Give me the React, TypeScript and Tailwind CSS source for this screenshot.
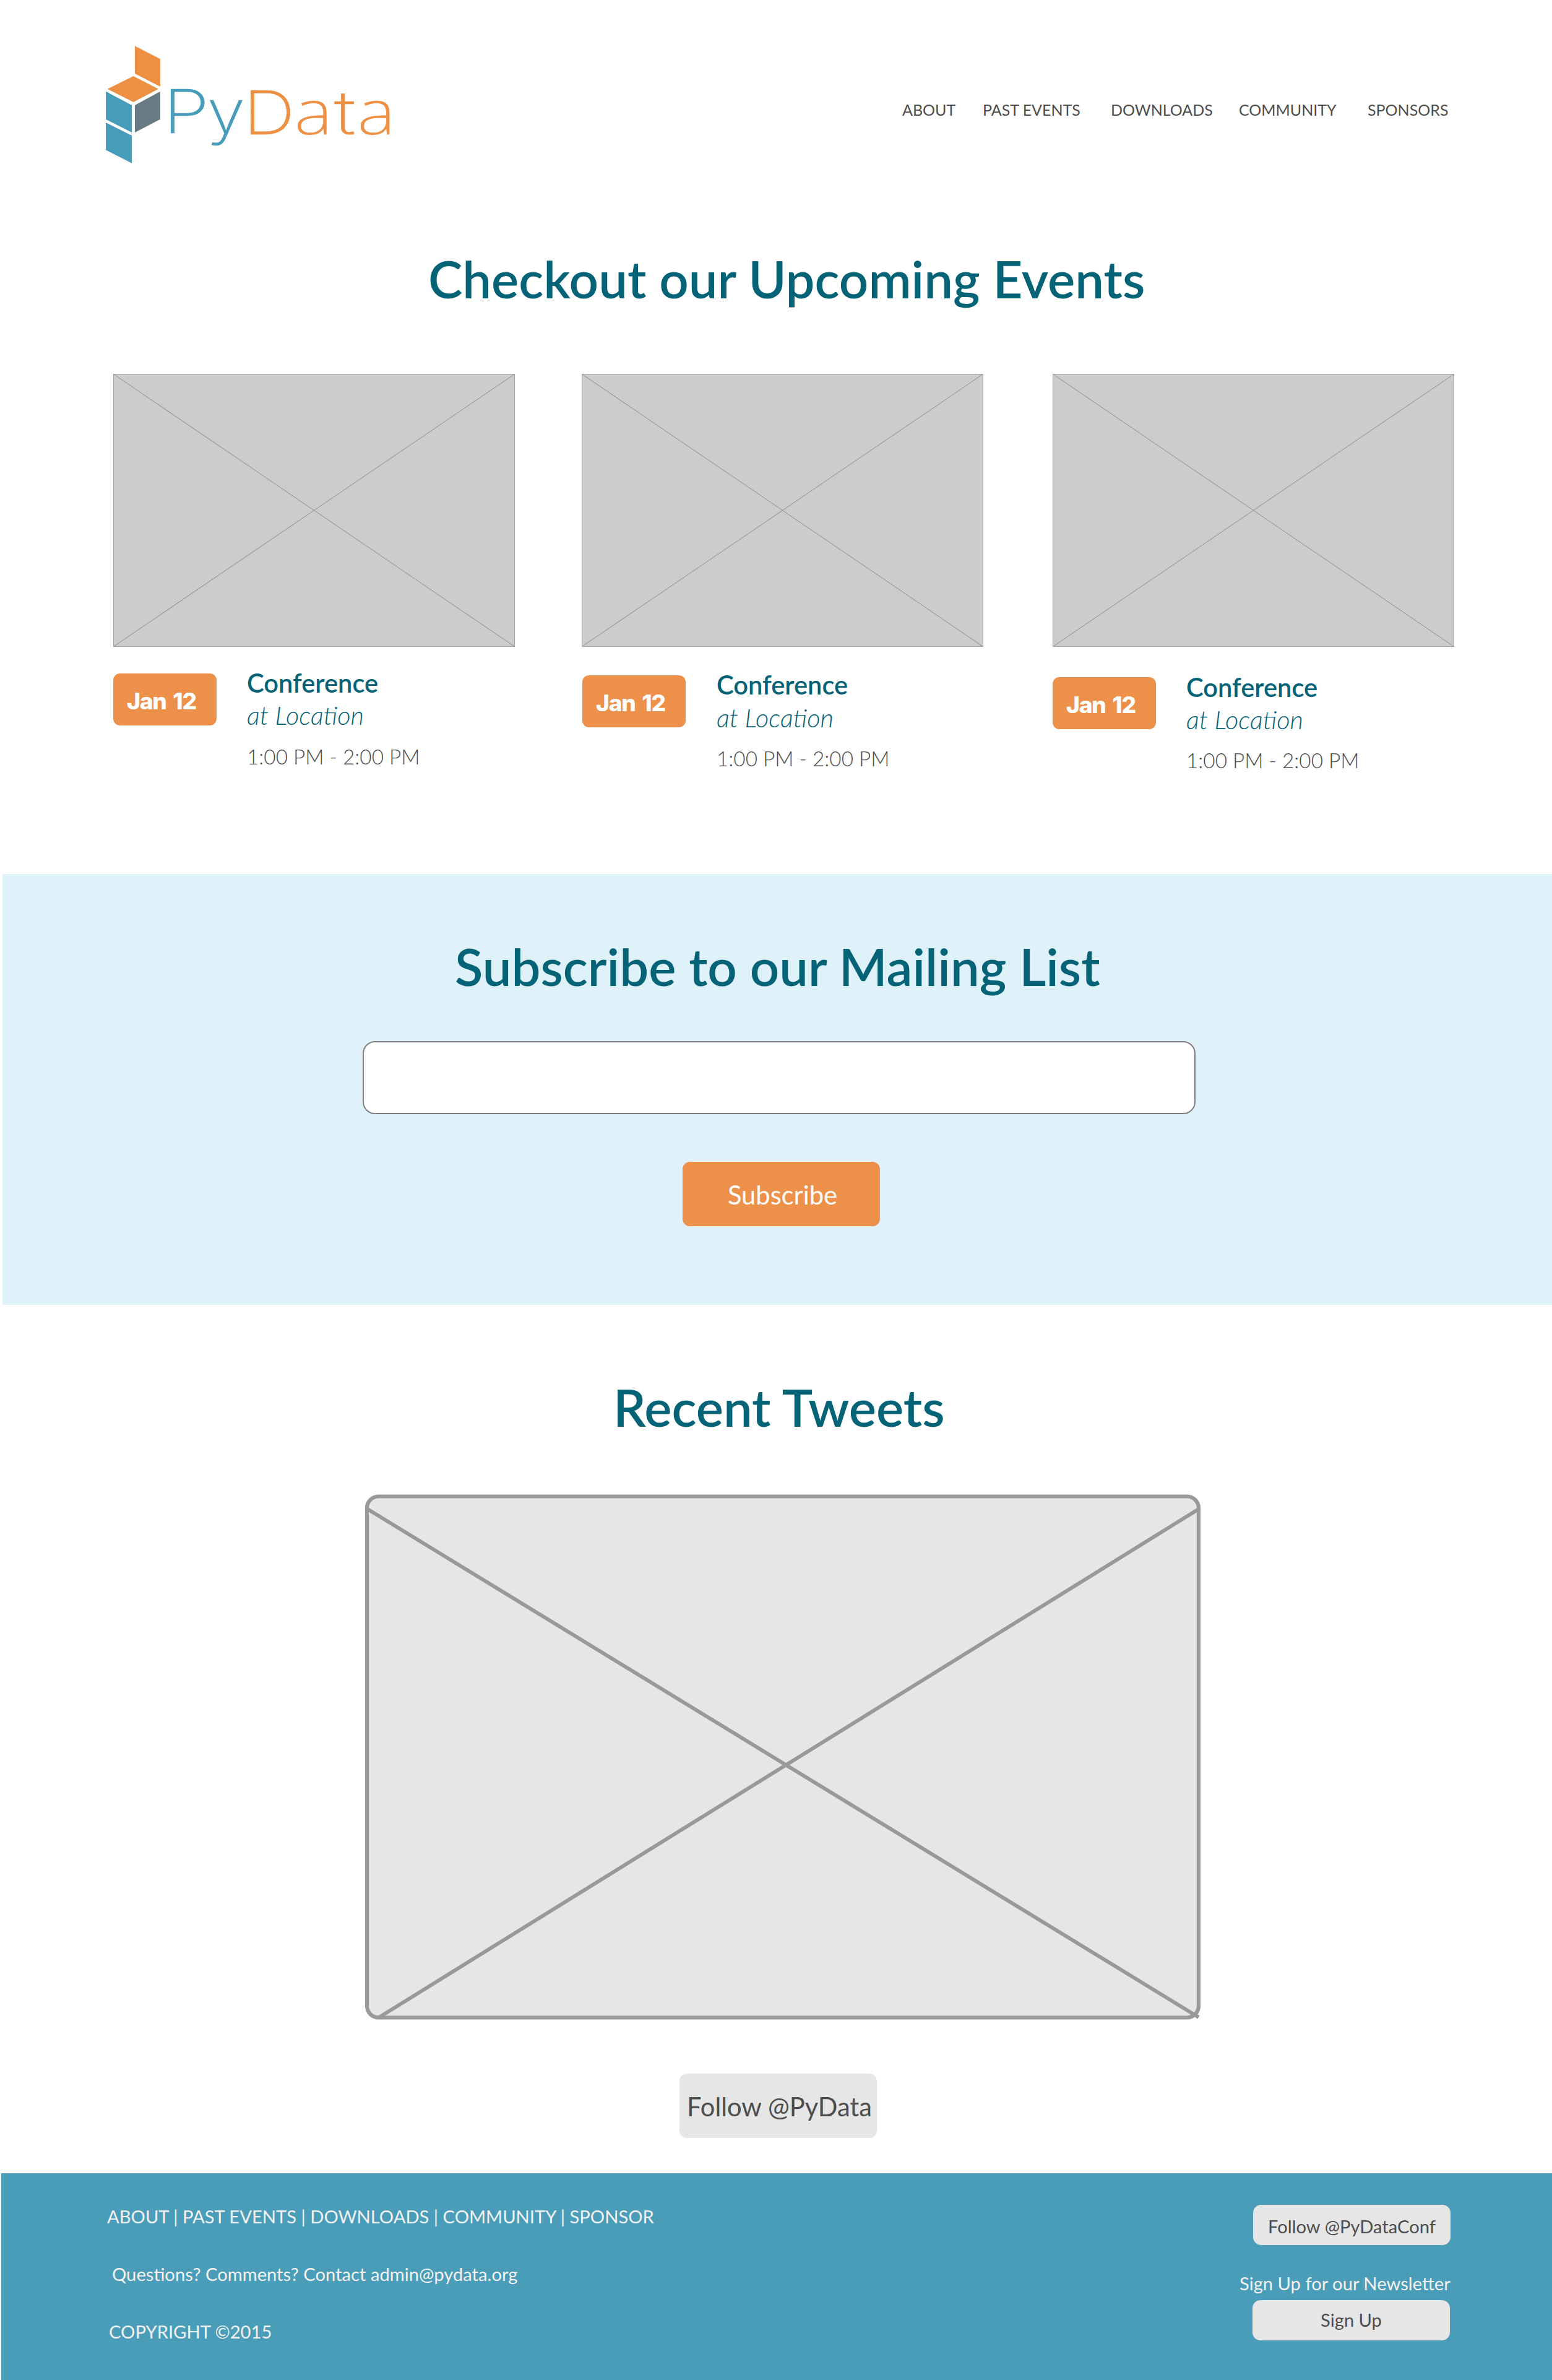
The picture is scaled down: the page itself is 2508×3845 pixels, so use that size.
const navItems = ["ABOUT", "PAST EVENTS", "DOWNLOADS", "COMMUNITY", "SPONSORS"];

const letters = [
  { c: "P", font: "Inter", size: 98, fill: "#479cba", t: "translate(263.5 215) scale(1.235 1)" },
  { c: "y", font: "Inter", size: 98, fill: "#479cba", t: "translate(334.8 215) scale(1.137 1)" },
  { c: "D", font: "Inter", size: 98, fill: "#ed9044", t: "translate(393 217) scale(1.19 1)" },
  { c: "a", font: "Noto Sans", size: 99, fill: "#ed9044", t: "translate(475.7 217) scale(1.185 1)" },
  { c: "t", font: "Inter", size: 98, fill: "#ed9044", t: "translate(539.9 217) scale(1.32 1)" },
  { c: "a", font: "Noto Sans", size: 99, fill: "#ed9044", t: "translate(577.4 217) scale(1.185 1)" },
];

function Logo() {
  return (
    <svg className="block shrink-0" width="520" height="230" viewBox="150 50 520 230">
      <path fill="#ed9044" d="M218 74.3L259 95.3V140L218 119Z" />
      <path fill="#ed9044" d="M215.5 123L256 143.7L215.5 165L173.7 143.7Z" />
      <path fill="#479cba" d="M171 147.7L213 170V214L171 192.7Z" />
      <path fill="#687b83" d="M259 147.7V192.7L218 214V170Z" />
      <path fill="#479cba" d="M171 198L213 219V263.7L171 242.3Z" />
      {letters.map((l, i) => (
        <text key={i} fontFamily={l.font} fontSize={l.size} fontWeight="200" fill={l.fill} stroke={l.fill} strokeWidth="0.5" transform={l.t}>
          {l.c}
        </text>
      ))}
    </svg>
  );
}

function Placeholder() {
  return (
    <svg className="block" width="649" height="441" viewBox="0 0 649 441">
      <rect x="0.5" y="0.5" width="648" height="440" fill="#cccccc" stroke="#a3a3a3" />
      <path d="M0.5 0.5L648.5 440.5M648.5 0.5L0.5 440.5" stroke="#a0a0a0" strokeWidth="1.25" />
    </svg>
  );
}

function EventCard({ badge, title, place, time }: { badge: string; title: string; place: string; time: string }) {
  return (
    <article className="w-[649px]">
      <Placeholder />
      <div className="flex items-start">
        <div className={"h-[84px] w-[167px] rounded-[11px] bg-[#ed9049] pt-[18px] pl-[22px] " + badge}>
          <div className="font-[Inter] text-[37.2px] leading-[54px] font-extrabold tracking-[-1.3px] text-white [word-spacing:4px]">Jan 12</div>
        </div>
        <div className="ml-[49px]">
          <h3 className={"text-[41.67px] leading-[50px] font-semibold text-[#056378] " + title}>Conference</h3>
          <p className={"text-[41.67px] leading-[50px] font-light text-[#056378] italic " + place}>at Location</p>
          <p className={"text-[33.33px] leading-[40px] font-light text-[#4d4d4d] " + time}>1:00 PM - 2:00 PM</p>
        </div>
      </div>
    </article>
  );
}

export default function App() {
  return (
    <div className="flex h-[3845px] w-[2508px] flex-col overflow-hidden bg-white font-['Lato',sans-serif] whitespace-nowrap">
      <header className="flex h-[400px] items-start pt-[50px] pl-[150px]">
        <Logo />
        <nav className="mt-[112px] ml-[788px] grid grid-cols-[130px_207px_207px_208px_140px] text-[25px] leading-[30px] text-[#4d4d4d]">
          {navItems.map((n) => (
            <a key={n}>{n}</a>
          ))}
        </nav>
      </header>

      <section className="h-[1012px]">
        <h2 className="pl-[692px] text-[83.33px] leading-[100px] font-semibold text-[#056378]">Checkout our Upcoming Events</h2>
        <div className="mt-[104px] flex pl-[183px]">
          <EventCard badge="mt-[43px]" title="mt-[33px]" place="mt-[2px]" time="mt-[22px]" />
          <div className="w-[108px]" />
          <EventCard badge="mt-[46px] ml-[1px] mr-[1px]" title="mt-[36px]" place="mt-[3px]" time="mt-[21px]" />
          <div className="w-[112px]" />
          <EventCard badge="mt-[49px]" title="mt-[40px]" place="mt-[2px]" time="mt-[21px]" />
        </div>
      </section>

      <section className="ml-[4px] h-[696px] bg-[#dff1f9] pt-[99px]">
        <h2 className="pl-[731px] text-[83.33px] leading-[100px] font-semibold text-[#056378]">Subscribe to our Mailing List</h2>
        <div className="mt-[71px] ml-[582px] h-[118px] w-[1346px] rounded-[20px] border-2 border-[#808080] bg-white" />
        <button className="mt-[77px] ml-[1099px] block h-[104px] w-[319px] rounded-[12px] bg-[#ed9049] pt-[2px] pl-[4px] text-[41.67px] leading-[50px] text-white">
          Subscribe
        </button>
      </section>

      <section className="h-[1403px] pt-[115px]">
        <h2 className="pl-[991px] text-[83.33px] leading-[100px] font-semibold text-[#056378]">Recent Tweets</h2>
        <svg className="mt-[91px] ml-[590px] block" width="1352" height="850" viewBox="590 2414 1352 850">
          <rect x="593" y="2417.5" width="1344" height="842" rx="19" fill="#e6e6e6" stroke="#999999" strokeWidth="6.2" />
          <path d="M594 2438L1937 3259M1937 2438L612 3259.5" stroke="#999999" strokeWidth="6" />
        </svg>
        <button className="mt-[86px] ml-[1098px] block h-[104px] w-[319px] rounded-[12px] bg-[#e6e6e6] pt-[2px] pl-[4px] text-[41.67px] leading-[50px] text-[#4d4d4d]">
          Follow @PyData
        </button>
      </section>

      <footer className="ml-[2px] flex h-[334px] bg-[#4a9db9] text-[29.17px] leading-[35px] text-[#f2f2f2]">
        <div className="w-[2000px] pt-[52px]">
          <p className="pl-[171px]">ABOUT | PAST EVENTS | DOWNLOADS | COMMUNITY | SPONSOR</p>
          <p className="mt-[58px] pl-[179px]">Questions? Comments? Contact admin@pydata.org</p>
          <p className="mt-[58px] pl-[174px]">COPYRIGHT ©2015</p>
        </div>
        <div className="pt-[51px]">
          <button className="ml-[23px] block h-[65px] w-[319px] rounded-[13px] bg-[#e6e6e6] pt-[4px] text-[#4d4d4d]">Follow @PyDataConf</button>
          <p className="mt-[44px] pl-[1px]">Sign Up for our Newsletter</p>
          <button className="mt-[10px] ml-[22px] block h-[65px] w-[319px] rounded-[13px] bg-[#e6e6e6] pb-[2px] text-[#4d4d4d]">Sign Up</button>
        </div>
      </footer>
    </div>
  );
}
